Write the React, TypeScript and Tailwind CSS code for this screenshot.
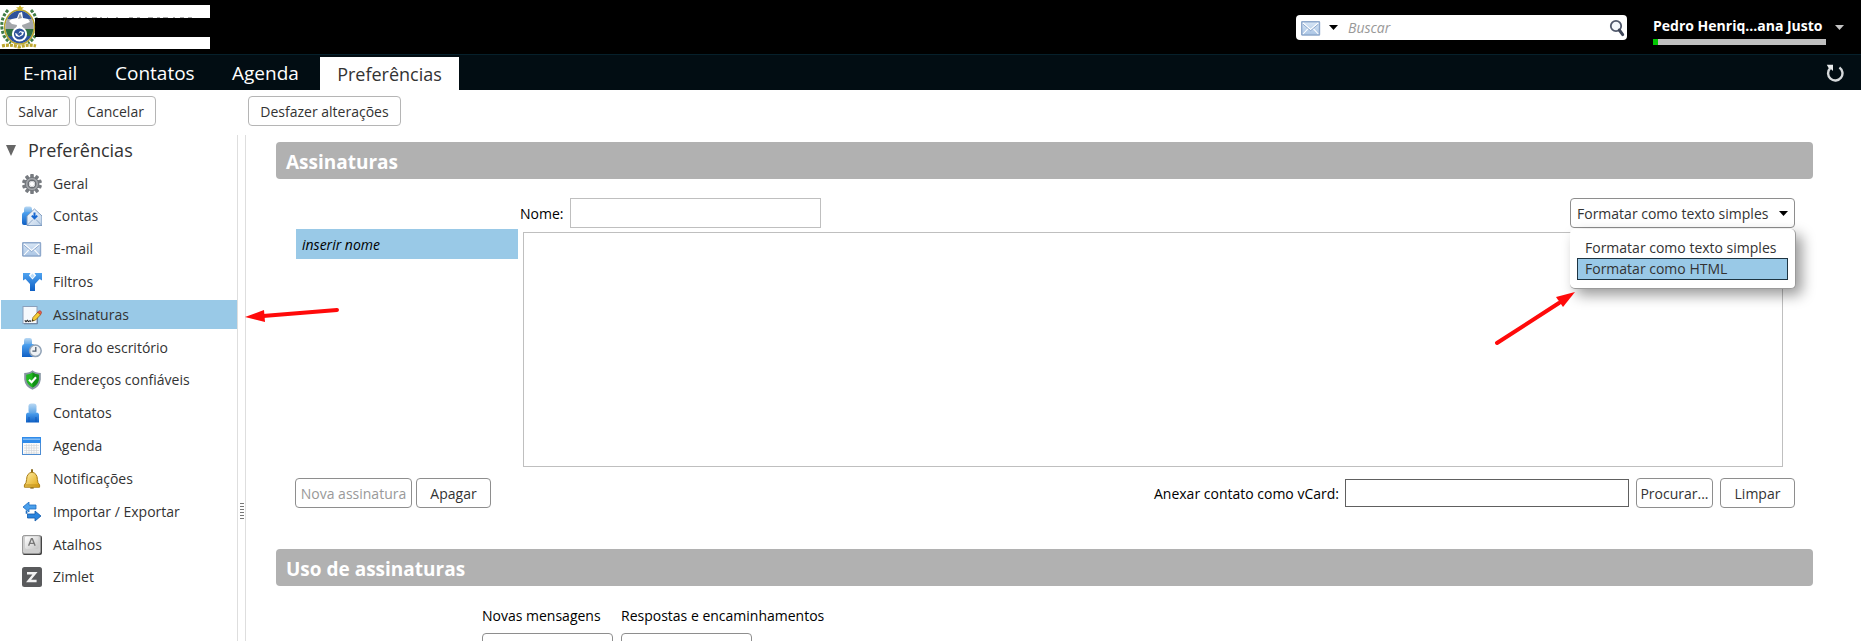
import React from 'react'

type NavItem = { label: string; icon: React.ReactNode; active?: boolean }

/* ---------- icons ---------- */

function Gradients() {
    return (
        <svg width="0" height="0" className="absolute" aria-hidden="true">
            <defs>
                <linearGradient id="blue" x1="0" y1="0" x2="0" y2="1">
                    <stop offset="0" stopColor="#4fa3f0" />
                    <stop offset="1" stopColor="#0f5fc4" />
                </linearGradient>
                <linearGradient id="head" x1="0" y1="0" x2="0" y2="1">
                    <stop offset="0" stopColor="#b9d8f3" />
                    <stop offset="1" stopColor="#5aa3e6" />
                </linearGradient>
                <linearGradient id="paper" x1="0" y1="0" x2="1" y2="1">
                    <stop offset="0" stopColor="#ffffff" />
                    <stop offset="1" stopColor="#b9cfe8" />
                </linearGradient>
                <linearGradient id="mail" x1="0" y1="0" x2="0" y2="1">
                    <stop offset="0" stopColor="#d9e7f6" />
                    <stop offset="1" stopColor="#a9c4e4" />
                </linearGradient>
                <linearGradient id="gold" x1="0" y1="0" x2="1" y2="1">
                    <stop offset="0" stopColor="#fff0a8" />
                    <stop offset="1" stopColor="#dfa30d" />
                </linearGradient>
                <linearGradient id="key" x1="0" y1="0" x2="1" y2="1">
                    <stop offset="0" stopColor="#ffffff" />
                    <stop offset="1" stopColor="#c4c4c4" />
                </linearGradient>
            </defs>
        </svg>
    )
}

function Icon({ children }: { children: React.ReactNode }) {
    return <svg viewBox="0 0 20 20" className="size-5 shrink-0" aria-hidden="true">{children}</svg>
}

const teeth = [0, 36, 72, 108, 144, 180, 216, 252, 288, 324]

const GearIcon = () => (
    <Icon>
        <g fill="#777b80">
            {teeth.map((a) => <rect key={a} x="8.2" y="0" width="3.6" height="5" rx="0.8" transform={`rotate(${a} 10 10)`} />)}
        </g>
        <circle cx="10" cy="10" r="6.6" fill="#a2a5a9" stroke="#73777c" />
        <circle cx="10" cy="10" r="3.8" fill="#fff" stroke="#6b6f74" strokeWidth="1.4" />
        <circle cx="10" cy="10" r="2.6" fill="#fff" stroke="#c5c8cb" strokeWidth="0.8" />
    </Icon>
)

const AccountIcon = () => (
    <Icon>
        <path d="M2 3Q2 0.5 4 0.5H8Q10 0.5 10 3V7H2Z" fill="url(#head)" />
        <path d="M0 9Q0 6 3 6H10V19H2Q0 19 0 17Z" fill="url(#blue)" />
        <path d="M5 10L12.5 3L20 10V19.5H5Z" fill="url(#paper)" stroke="#7f9cc0" />
        <path d="M5.5 19L11 13.5M19.5 19L14 13.5" stroke="#8ba6c8" fill="none" />
        <path d="M12.5 6.5V12M9.8 9.6L12.5 12.4L15.2 9.6" stroke="#1767d0" strokeWidth="2" fill="none" />
    </Icon>
)

const MailIcon = () => (
    <Icon>
        <rect x="0.7" y="3.7" width="17.8" height="13.3" rx="0.6" fill="url(#mail)" stroke="#8fa9cc" strokeWidth="1.4" />
        <path d="M2 5L9.6 11.5L17.3 5M2 16L7.3 10.3M17.3 16L12 10.3" stroke="#fff" strokeWidth="1.1" fill="none" />
        <path d="M2 6.2L9.6 12.7L17.3 6.2" stroke="#7d9cc4" strokeWidth="0.8" fill="none" />
    </Icon>
)

const FilterIcon = () => (
    <Icon>
        <path d="M1 1H8.5L6.9 3.6L10.5 7.4L14.1 3.6L12.5 1H20V8.5L17.6 7L13 12V19H8V12L3.4 7L1 8.5Z" fill="url(#blue)" />
        <path d="M10.5 1.6L12.8 4L10.5 6.3L8.2 4Z" fill="#bcdcf8" />
    </Icon>
)

const SignatureIcon = () => (
    <Icon>
        <rect x="1" y="1.5" width="14" height="17" fill="#f6f9fd" stroke="#8ba0bc" />
        <path d="M2 18.8H15.4V8" stroke="#6b7f9b" fill="none" />
        <path d="M2.8 15.3L4 16.6L5.4 15.3L6.5 16.6L8 15.6L9 16.6" stroke="#222" strokeWidth="1.1" fill="none" />
        <path d="M10 16.2L11 12.4L16 7L18.7 9.6L13.6 15Z" fill="#f5cc35" stroke="#8a6614" strokeWidth="0.8" />
        <path d="M15.6 7.2L17 5.9Q18 5.3 19 6.2Q20 7.3 19.3 8.3L18.3 9.5Z" fill="#e8604c" stroke="#a5362a" strokeWidth="0.6" />
        <path d="M10 16.2L10.5 14.3L11.9 15.7Z" fill="#222" />
    </Icon>
)

const AwayIcon = () => (
    <Icon>
        <path d="M2 2.5Q2 0 4 0H8Q10 0 10 2.5V7H2Z" fill="url(#head)" />
        <path d="M0 9Q0 6 3 6H10Q13 6 13 9V19H0Z" fill="url(#blue)" />
        <circle cx="13.4" cy="12.8" r="5.8" fill="#eef1f4" stroke="#8fa1b5" strokeWidth="1.5" />
        <path d="M13.8 9V13.2H10.4" stroke="#4d5b6b" strokeWidth="1.3" fill="none" />
    </Icon>
)

const ShieldIcon = () => (
    <Icon>
        <path d="M10.5 0.3Q13.5 3 18.8 3V9.5Q18 16.8 10.5 19.8Q3 16.8 2.2 9.5V3Q7.5 3 10.5 0.3Z" fill="#8795a3" />
        <path d="M10.5 2.5Q13.2 4.5 16.8 4.7V9.5Q16 14.9 10.5 17.5Q5 14.9 4.2 9.5V4.7Q7.8 4.5 10.5 2.5Z" fill="#22b822" />
        <path d="M10.5 2.5Q13.2 4.5 16.8 4.7V9.5Q16 14.9 10.5 17.5Z" fill="#109116" />
        <path d="M7 9.8L9.6 12.3L14 7.3" stroke="#fff" strokeWidth="2.1" fill="none" />
    </Icon>
)

const PersonIcon = () => (
    <Icon>
        <path d="M4 19.5V12Q4 9.5 6.5 9.5H14.5Q17 9.5 17 12V19.5Z" fill="url(#blue)" />
        <path d="M7 14V19M14 14V19" stroke="#0b54b4" strokeWidth="0.8" />
        <rect x="6.5" y="0.5" width="8" height="10" rx="2.8" fill="url(#head)" />
    </Icon>
)

const CalendarIcon = () => (
    <Icon>
        <rect x="0.5" y="1.5" width="18" height="17" fill="#fafafa" stroke="#4d8cd2" />
        <rect x="0" y="1" width="19" height="6" fill="#2f8bea" />
        <path d="M1 3.2H18" stroke="#8cc1f5" strokeWidth="1.4" />
        <path d="M2 9.5H17M2 12H17M2 14.5H17M2 17H17M4.5 8V18M7 8V18M9.5 8V18M12 8V18M14.5 8V18" stroke="#d3d5d8" strokeWidth="0.7" />
    </Icon>
)

const BellIcon = () => (
    <Icon>
        <path d="M10 0.3V4" stroke="#8a6a1c" strokeWidth="2" />
        <path d="M8.3 19.6H11.7V17.6H8.3Z" fill="#7f5f18" />
        <path d="M10 3.2Q15.2 4 15.4 10.5Q15.5 14 17.6 16V18.2H2.4V16Q4.5 14 4.6 10.5Q4.8 4 10 3.2Z" fill="url(#gold)" stroke="#a97d16" />
        <path d="M3 16H17" stroke="#b98a18" strokeWidth="0.9" />
    </Icon>
)

const TransferIcon = () => (
    <Icon>
        <path d="M1 5L7 0V3H14V7H7V10Z" fill="#4ba0ec" stroke="#1e6cc0" strokeWidth="0.8" />
        <path d="M4.5 8.5V11H5.5" stroke="#1e6cc0" strokeWidth="1.6" fill="none" />
        <path d="M19 14L13 9V12H5.5V16H13V19Z" fill="#2b85de" stroke="#1359a8" strokeWidth="0.8" />
    </Icon>
)

const KeyIcon = () => (
    <Icon>
        <rect x="0.5" y="0.5" width="19.5" height="19.5" rx="2" fill="#444" />
        <rect x="0.5" y="0.5" width="18" height="18" rx="2" fill="#cfcfcf" stroke="#999" />
        <rect x="3" y="1.4" width="13.5" height="12.6" rx="1.4" fill="url(#key)" />
        <path d="M6.6 10.8L9.4 3.8H10.3L13.1 10.8M7.7 8.4H12" stroke="#777" strokeWidth="1.4" fill="none" />
    </Icon>
)

const ZimletIcon = () => (
    <Icon>
        <rect width="20" height="20" rx="2.5" fill="#595a5c" />
        <path d="M5 6.3H13L6.6 14H14.6" stroke="#f2f2f2" strokeWidth="2.4" fill="none" />
    </Icon>
)

function Caret({ className }: { className: string }) {
    return <svg viewBox="0 0 9 5" className={className} aria-hidden="true"><path d="M0 0H9L4.5 5Z" fill="currentColor" /></svg>
}

/* state coat of arms with the two white stripes behind it */
function Logo() {
    return (
        <svg viewBox="0 0 210 44" className="h-11 w-[210px]" aria-hidden="true">
            <rect width="210" height="44" fill="#fff" />
            <rect x="35" y="13" width="175" height="19" fill="#000" />
            <path d="M63 12.5H67M72 12.5H74M79 12.5H81M85 12.5H87M92 12.5H97M100 12.5H102M107 12.5H108M116 12.5H118M129 12.5H133M137 12.5H140M148 12.5H153M157 12.5H160M163 12.5H168M173 12.5H175M180 12.5H184M188 12.5H192" stroke="#aaa" />
            <path d="M8 5Q-2 16 4 31Q7 36 11 38M31 5Q41 16 35 31Q32 36 28 38" stroke="#3f7c46" strokeWidth="3" strokeDasharray="3 1.5" fill="none" />
            <rect x="35" y="13" width="6" height="19" fill="#000" />
            <ellipse cx="19.5" cy="22" rx="14.8" ry="17" fill="#fff" stroke="#b9a52c" strokeWidth="1.6" />
            <clipPath id="oval"><ellipse cx="19.5" cy="22" rx="14" ry="16.2" /></clipPath>
            <g clipPath="url(#oval)">
                <rect x="4" y="4" width="32" height="10" fill="#2d529b" />
                <rect x="4" y="14" width="32" height="10" fill="#a3a6aa" />
                <rect x="4" y="24" width="32" height="7" fill="#2f7040" />
                <rect x="4" y="31" width="32" height="9" fill="#2d529b" />
                <path d="M19 8L22 7L23 13L28 14L30 17L25 19L22 20L23 25H16L17 20L12 19L9 16L12 14L17 13Z" fill="#fff" />
                <path d="M20 8L22 13L18 14Z" fill="#9a9da2" />
            </g>
            <circle cx="19.5" cy="29" r="7.6" fill="#fff" />
            <circle cx="19.5" cy="29" r="5.6" fill="#2d529b" />
            <path d="M15 28L18 29L20 26L24 27L23 30L19 32L16 31Z" fill="#fff" />
            <path d="M17 29L21 27L22 29L19 31Z" fill="#2d529b" />
            <path d="M20 0L21.3 2.3H24L22 4L22.7 6L20 5L17.3 6L18 4L16 2.3H18.7Z" fill="#cdb62c" />
            <path d="M2 41Q10 39 19 42Q28 39 36 41" stroke="#bea72e" strokeWidth="3.2" strokeDasharray="3 1" fill="none" />
        </svg>
    )
}

const items: NavItem[] = [
    { label: 'Geral', icon: <GearIcon /> },
    { label: 'Contas', icon: <AccountIcon /> },
    { label: 'E-mail', icon: <MailIcon /> },
    { label: 'Filtros', icon: <FilterIcon /> },
    { label: 'Assinaturas', icon: <SignatureIcon />, active: true },
    { label: 'Fora do escritório', icon: <AwayIcon /> },
    { label: 'Endereços confiáveis', icon: <ShieldIcon /> },
    { label: 'Contatos', icon: <PersonIcon /> },
    { label: 'Agenda', icon: <CalendarIcon /> },
    { label: 'Notificações', icon: <BellIcon /> },
    { label: 'Importar / Exportar', icon: <TransferIcon /> },
    { label: 'Atalhos', icon: <KeyIcon /> },
    { label: 'Zimlet', icon: <ZimletIcon /> },
]

function Header() {
    return (
        <header className="flex h-[54px] items-start bg-black pr-[17px]">
            <div className="mt-[5px]"><Logo /></div>
            <form className="mt-[15px] ml-auto flex h-[25px] w-[331px] items-center rounded-[4px] bg-white pr-[2px] pl-[5px]">
                <MailIcon />
                <Caret className="ml-2 h-[5px] w-[9px] text-black" />
                <input
                    type="search"
                    aria-label="Buscar"
                    placeholder="Buscar"
                    className="ml-2.5 min-w-0 flex-1 text-sm italic outline-none placeholder:text-[#999]"
                />
                <button type="button" aria-label="Pesquisar">
                    <svg viewBox="0 0 16 18" className="h-[18px] w-4" aria-hidden="true">
                        <circle cx="7" cy="7" r="5.2" fill="#f4f7fb" stroke="#50586b" strokeWidth="1.8" />
                        <path d="M10.3 11L13.7 15.6" stroke="#3f4658" strokeWidth="3" strokeLinecap="round" />
                    </svg>
                </button>
            </form>
            <button type="button" className="mt-4 ml-[26px] flex items-start text-white">
                <span className="w-[173px] text-left">
                    <span className="block text-sm leading-5 font-bold whitespace-nowrap">Pedro Henriq...ana Justo</span>
                    <span className="mt-[3px] block h-1.5 bg-[#bfbfbf]">
                        <span className="block h-full w-[5px] bg-[#00c800]" />
                    </span>
                </span>
                <Caret className="mt-[9px] ml-[9px] h-[5px] w-[9px] text-[#c4c4c4]" />
            </button>
        </header>
    )
}

function TabBar() {
    return (
        <nav className="flex h-9 items-end border-t border-[#06202b] bg-[#020d13] pr-4 text-[19px] leading-[33px] text-white">
            <a href="#" className="w-[97px] pl-[23px]">E-mail</a>
            <a href="#" className="w-[116px] pl-[18px]">Contatos</a>
            <a href="#" className="w-[107px] pl-[19px]">Agenda</a>
            <a href="#" className="h-[33px] w-[139px] bg-white text-center text-lg leading-[34px] text-[#333]">Preferências</a>
            <button type="button" aria-label="Atualizar" className="mr-px mb-2 ml-auto">
                <svg viewBox="0 0 18 18" className="size-[18px]" aria-hidden="true">
                    <path d="M13.4 3.4A7.2 7.2 0 1 1 4.2 4.2" stroke="#d6d9db" strokeWidth="2.4" fill="none" />
                    <path d="M0.8 0.8H7V7L4.8 5L2.6 4Z" fill="#e8eaeb" />
                </svg>
            </button>
        </nav>
    )
}

function Button({ className, children, disabled }: { className: string; children: React.ReactNode; disabled?: boolean }) {
    return (
        <button
            type="button"
            disabled={disabled}
            className={`h-[30px] rounded-[4px] border bg-white pt-0.5 text-sm whitespace-nowrap text-[#333] disabled:text-[#999] ${className}`}
        >
            {children}
        </button>
    )
}

function Sidebar() {
    return (
        <aside className="w-[238px] shrink-0 border-r border-[#dedede]">
            <h2 className="flex h-[34px] items-center pb-1 pl-[6px] text-lg text-[#333]">
                <svg viewBox="0 0 10 11" className="mr-3 h-[11px] w-2.5" aria-hidden="true"><path d="M0 0H10L5 11Z" fill="#666" /></svg>
                Preferências
            </h2>
            <ul className="flex h-[423px] flex-col justify-between pl-px text-sm">
                {items.map((item) => (
                    <li key={item.label} className={item.active ? 'relative bg-[#99c9e7]' : undefined}>
                        <a href="#" className="flex h-[29px] items-center pl-[21px] text-[#333]">
                            {item.icon}
                            <span className="ml-[11px]">{item.label}</span>
                        </a>
                        {item.active && (
                            <svg viewBox="0 0 96 18" className="absolute top-1.5 left-full z-10 ml-2 h-[18px] w-24" aria-hidden="true">
                                <path d="M18 10L92 4" stroke="#ff0a0a" strokeWidth="4" strokeLinecap="round" />
                                <path d="M0 11L19 4L20 16Z" fill="#ff0a0a" />
                            </svg>
                        )}
                    </li>
                ))}
            </ul>
        </aside>
    )
}

function SectionTitle({ children }: { children: React.ReactNode }) {
    return <h3 className="h-[37px] rounded-[4px] bg-[#b1b1b1] pl-2.5 text-[19px] leading-10 font-bold text-white">{children}</h3>
}

function FormatSelect() {
    return (
        <div className="relative ml-auto h-[30px] w-[225px]">
            <select aria-label="Formato" className="size-full appearance-none rounded-[4px] border border-[#8e8e8e] bg-white pt-0.5 pl-1.5 text-sm text-[#333]">
                <option>Formatar como texto simples</option>
                <option>Formatar como HTML</option>
            </select>
            <Caret className="pointer-events-none absolute top-[13px] right-[7px] h-[5px] w-[9px] text-black" />
            <div className="absolute top-[31px] left-0 z-10 h-[60px] w-[226px] rounded-[5px] border-r border-b border-[#9a9a9a] bg-white px-[7px] pt-2 text-sm text-[#333] shadow-[6px_6px_14px_rgba(0,0,0,0.4)]">
                <button type="button" className="block h-[21px] w-full pl-2 text-left">Formatar como texto simples</button>
                <button type="button" className="block h-[22px] w-full border border-[#1d3442] bg-[#99c9e7] pl-[7px] text-left">Formatar como HTML</button>
            </div>
            <svg viewBox="0 0 84 58" className="absolute top-[92px] right-[220px] z-10 h-[58px] w-[84px]" aria-hidden="true">
                <path d="M6 53L68 13" stroke="#ff0a0a" strokeWidth="4" strokeLinecap="round" />
                <path d="M84 2L65 7L72 17Z" fill="#ff0a0a" />
            </svg>
        </div>
    )
}

function Signatures() {
    return (
        <div className="pt-[19px] pr-[18px] pl-5 text-sm text-black">
            <div className="flex items-center pl-[224px]">
                <label htmlFor="name" className="w-[50px] pt-0.5">Nome:</label>
                <input id="name" type="text" className="h-[30px] w-[251px] border border-[#bfbfbf] px-1 outline-none" />
                <FormatSelect />
            </div>
            <div className="mt-px flex">
                <div className="h-[30px] w-[222px] shrink-0 bg-[#99c9e7] pl-1.5 leading-8 italic">inserir nome</div>
                <textarea aria-label="Assinatura" className="mt-[3px] mr-3 ml-[5px] h-[235px] min-w-0 flex-1 resize-none border border-[#bfbfbf] p-1 outline-none" />
            </div>
            <div className="mt-[11px] -ml-px flex items-center">
                <Button className="w-[117px] border-[#8e8e8e]" disabled>Nova assinatura</Button>
                <Button className="ml-1 w-[75px] border-[#8e8e8e]">Apagar</Button>
                <label htmlFor="vcard" className="mr-1.5 ml-auto pt-0.5">Anexar contato como vCard:</label>
                <input id="vcard" type="text" className="h-7 w-[284px] border border-[#606060] px-1 outline-none" />
                <Button className="ml-[7px] w-[77px] border-[#8e8e8e]">Procurar...</Button>
                <Button className="ml-[7px] w-[75px] border-[#8e8e8e]">Limpar</Button>
            </div>
        </div>
    )
}

function App() {
    return (
        <div className="flex h-screen flex-col overflow-hidden bg-white font-['Open_Sans',sans-serif]">
            <Gradients />
            <Header />
            <TabBar />
            {/* toolbar */}
            <div className="flex h-[45px] shrink-0 items-start pt-1.5 pl-1.5">
                <Button className="w-16 border-[#b5b5b5]">Salvar</Button>
                <Button className="ml-[5px] w-[81px] border-[#b5b5b5]">Cancelar</Button>
                <Button className="ml-[92px] w-[153px] border-[#b5b5b5]">Desfazer alterações</Button>
            </div>
            <div className="flex min-h-0 flex-1">
                <Sidebar />
                {/* splitter */}
                <div className="flex w-2 shrink-0 flex-col items-center justify-center gap-[2px] border-r border-[#dedede] pt-[246px]">
                    <span className="h-px w-1 bg-[#777]" />
                    <span className="h-px w-1 bg-[#777]" />
                    <span className="h-px w-1 bg-[#777]" />
                    <span className="h-px w-1 bg-[#777]" />
                    <span className="h-px w-1 bg-[#777]" />
                    <span className="h-px w-1 bg-[#777]" />
                </div>
                <main className="min-w-0 flex-1 overflow-hidden pt-[7px] pr-12 pl-[30px]">
                    <SectionTitle>Assinaturas</SectionTitle>
                    <Signatures />
                    <div className="mt-[41px]">
                        <SectionTitle>Uso de assinaturas</SectionTitle>
                    </div>
                    <div className="mt-5 flex gap-2 pl-[206px] text-sm text-black">
                        <div className="w-[131px]">
                            <label htmlFor="new">Novas mensagens</label>
                            <select id="new" className="mt-[7px] block h-[30px] w-[131px] appearance-none rounded-[4px] border border-[#8e8e8e]" />
                        </div>
                        <div>
                            <label htmlFor="reply">Respostas e encaminhamentos</label>
                            <select id="reply" className="mt-[7px] block h-[30px] w-[131px] appearance-none rounded-[4px] border border-[#8e8e8e]" />
                        </div>
                    </div>
                </main>
            </div>
        </div>
    )
}

export default App
